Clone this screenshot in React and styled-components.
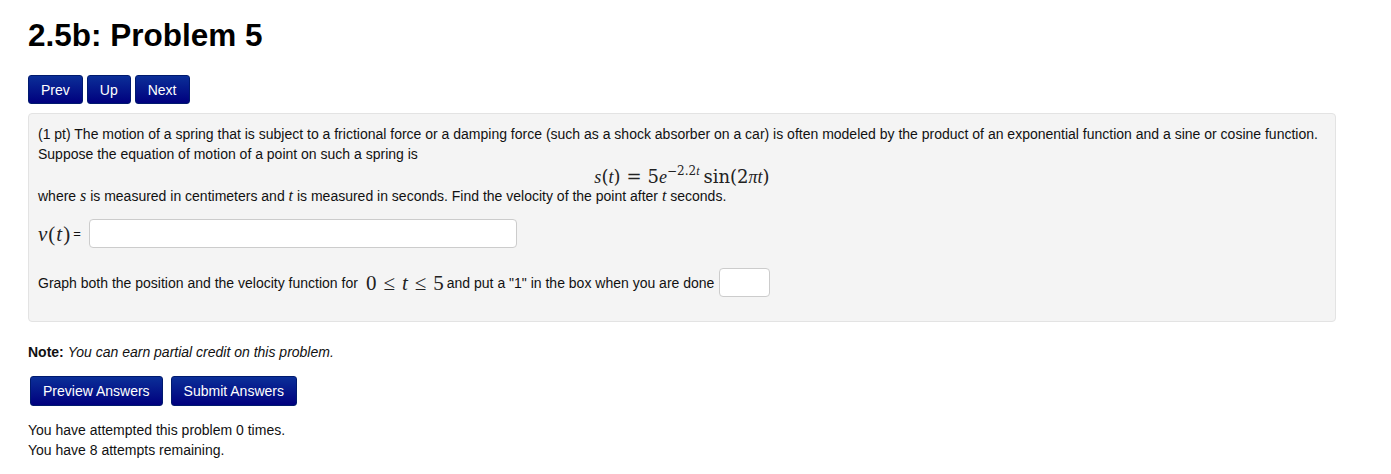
import React from 'react';
import styled, { createGlobalStyle } from 'styled-components';

const Global = createGlobalStyle`
  body {
    margin: 0;
    background: #fff;
    font-family: "Liberation Sans", Arial, sans-serif;
    color: #111;
  }
`;

function App() {
  return (
    <Page>
      <Global />
      <Title>2.5b: Problem 5</Title>
      <NavBar>
        <NavButton>Prev</NavButton>
        <NavButton>Up</NavButton>
        <NavButton>Next</NavButton>
      </NavBar>
      <ProblemBox>
        <Para>
          (1 pt) The motion of a spring that is subject to a frictional force or a damping force (such as a shock absorber on a car) is often modeled by the product of an exponential function and a sine or cosine function.
          <br />
          Suppose the equation of motion of a point on such a spring is
        </Para>
        <Display>
          <Var>s</Var>(<Var>t</Var>)<Op>=</Op>5<Var>e</Var>
          <Sup>−2.2<Var>t</Var></Sup>sin(2<Var>π</Var><Var>t</Var>)
        </Display>
        <Para>
          where <InlineVar>s</InlineVar> is measured in centimeters and <InlineVar>t</InlineVar> is measured in seconds. Find the velocity of the point after <InlineVar>t</InlineVar> seconds.
        </Para>
        <AnswerRow>
          <MathLabel><Var>v</Var>(<Var>t</Var>)</MathLabel>
          <Eq>=</Eq>
          <AnswerInput $width={428} />
        </AnswerRow>
        <GraphRow>
          Graph both the position and the velocity function for
          <RangeMath>0<Rel>≤</Rel><Var>t</Var><Rel>≤</Rel>5</RangeMath>
          and put a "1" in the box when you are done
          <AnswerInput $width={51} />
        </GraphRow>
      </ProblemBox>
      <Note>
        <b>Note:</b> <i>You can earn partial credit on this problem.</i>
      </Note>
      <ActionBar>
        <ActionButton>Preview Answers</ActionButton>
        <ActionButton>Submit Answers</ActionButton>
      </ActionBar>
      <Status>
        You have attempted this problem 0 times.
        <br />
        You have 8 attempts remaining.
      </Status>
    </Page>
  );
}

const Page = styled.div`
  padding: 15px 55px 0 28px;
  font-size: 14px;
`;

const Title = styled.h1`
  margin: 0 0 20px;
  font-size: 31.5px;
  font-weight: bold;
  line-height: 40px;
  color: #000;
`;

const NavBar = styled.div`
  display: flex;
  gap: 4px;
  margin-bottom: 9px;
`;

const buttonBase = `
  background: linear-gradient(#0b2f98, #00007e);
  color: #fff;
  border: 1px solid #001a6e;
  border-radius: 3px;
  font-family: "Liberation Sans", Arial, sans-serif;
  cursor: pointer;
  box-sizing: border-box;
`;

const NavButton = styled.button`
  ${buttonBase}
  height: 29px;
  padding: 0 12px;
  font-size: 14px;
`;

const ProblemBox = styled.div`
  background: #f4f4f4;
  border: 1px solid #e3e3e3;
  border-radius: 4px;
  padding: 10px 9px 24px;
  line-height: 20px;
`;

const Para = styled.div`
  line-height: 20px;
`;

const Display = styled.div`
  text-align: center;
  font-family: "DejaVu Serif", "Liberation Serif", serif;
  font-size: 18px;
  line-height: 22px;
  margin: 2px 0 -2px;
  color: #222;
`;

const Var = styled.span`
  font-family: "Liberation Serif", serif;
  font-style: italic;
`;

const InlineVar = styled(Var)`
  font-size: 16px;
`;

const Op = styled.span`
  margin: 0 6px;
`;

const Sup = styled.sup`
  font-size: 12px;
  vertical-align: 8px;
  line-height: 0;
  margin-right: 4px;
`;

const AnswerRow = styled.div`
  display: flex;
  align-items: center;
  margin-top: 13px;
`;

const MathLabel = styled.span`
  font-family: "Liberation Serif", serif;
  font-size: 21px;
  letter-spacing: 1px;
  color: #222;
`;

const Eq = styled.span`
  margin: 0 3px 0 2px;
  font-size: 13px;
`;

const AnswerInput = styled.input.attrs({ type: 'text' })`
  width: ${p => p.$width}px;
  height: 29px;
  box-sizing: border-box;
  border: 1px solid #ccc;
  border-radius: 4px;
  background: #fff;
  margin-left: 5px;
`;

const GraphRow = styled.div`
  display: flex;
  align-items: center;
  margin-top: 20px;
  white-space: pre;
`;

const RangeMath = styled.span`
  font-family: "Liberation Serif", serif;
  font-size: 21px;
  margin: 0 3px 0 8px;
  color: #222;
`;

const Rel = styled.span`
  margin: 0 7px;
`;

const Note = styled.div`
  margin-top: 20px;
  line-height: 20px;
`;

const ActionBar = styled.div`
  display: flex;
  gap: 8px;
  margin: 14px 0 0 2px;
`;

const ActionButton = styled.button`
  ${buttonBase}
  height: 30px;
  padding: 0 12px;
  font-size: 14px;
`;

const Status = styled.div`
  margin-top: 14px;
  line-height: 20px;
`;

export default App;
